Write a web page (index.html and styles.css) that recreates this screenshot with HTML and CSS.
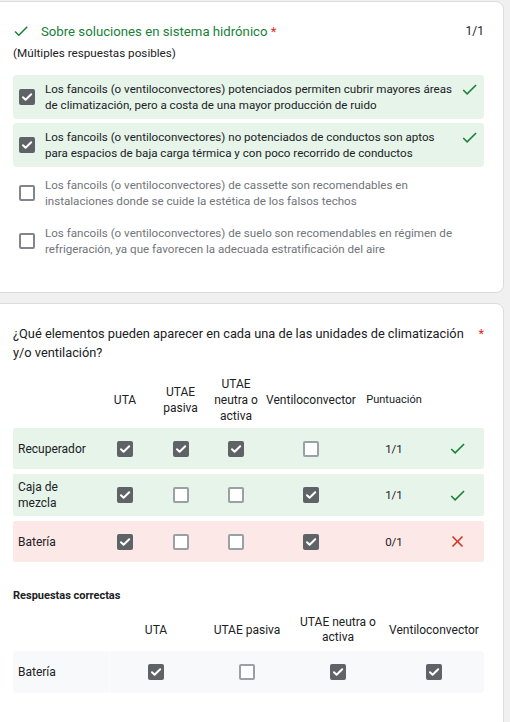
FILE: index.html
```html
<!DOCTYPE html>
<html lang="es">
<head>
<meta charset="utf-8">
<link rel="stylesheet" href="styles.css">
</head>
<body>
<svg width="0" height="0" class="defs">
  <defs>
    <symbol id="done" viewBox="0 0 24 24"><path d="M9 16.2L4.8 12l-1.4 1.4L9 19 21 7l-1.4-1.4L9 16.2z"/></symbol>
    <symbol id="close" viewBox="0 0 24 24"><path d="M19 6.41L17.59 5 12 10.59 6.41 5 5 6.41 10.59 12 5 17.59 6.41 19 12 13.41 17.59 19 19 17.59 13.41 12z"/></symbol>
    <symbol id="tick" viewBox="0 0 16 16"><path d="M4 8.2l2.6 2.6L12.2 5.2" fill="none" stroke="#fff" stroke-width="2" stroke-linecap="round" stroke-linejoin="round"/></symbol>
  </defs>
</svg>

<section class="card card-first">
  <div class="title-row">
    <svg class="ok-icon title-ok"><use href="#done"/></svg>
    <span class="title-text">Sobre soluciones en sistema hidrónico <span class="req">*</span></span>
    <span class="points">1/1</span>
  </div>
  <div class="subtitle">(Múltiples respuestas posibles)</div>
  <div class="options">
    <div class="option correct">
      <span class="cb on"><svg><use href="#tick"/></svg></span>
      <span class="opt-text">Los fancoils (o ventiloconvectores) potenciados permiten cubrir mayores áreas de climatización, pero a costa de una mayor producción de ruido</span>
      <svg class="ok-icon opt-ok"><use href="#done"/></svg>
    </div>
    <div class="option correct">
      <span class="cb on"><svg><use href="#tick"/></svg></span>
      <span class="opt-text">Los fancoils (o ventiloconvectores) no potenciados de conductos son aptos para espacios de baja carga térmica y con poco recorrido de conductos</span>
      <svg class="ok-icon opt-ok"><use href="#done"/></svg>
    </div>
    <div class="option">
      <span class="cb off"></span>
      <span class="opt-text muted">Los fancoils (o ventiloconvectores) de cassette son recomendables en instalaciones donde se cuide la estética de los falsos techos</span>
    </div>
    <div class="option">
      <span class="cb off"></span>
      <span class="opt-text muted">Los fancoils (o ventiloconvectores) de suelo son recomendables en régimen de refrigeración, ya que favorecen la adecuada estratificación del aire</span>
    </div>
  </div>
</section>

<section class="card card-second">
  <div class="question">
    <span class="q-text">¿Qué elementos pueden aparecer en cada una de las unidades de climatización y/o ventilación?</span>
    <span class="req q-req">*</span>
  </div>

  <div class="grid grid-head">
    <span></span>
    <span>UTA</span>
    <span>UTAE pasiva</span>
    <span>UTAE neutra o activa</span>
    <span>Ventiloconvector</span>
    <span class="score-head">Puntuación</span>
    <span></span>
  </div>
  <div class="grid grid-row good">
    <span class="label">Recuperador</span>
    <span class="cell"><span class="cb on"><svg><use href="#tick"/></svg></span></span>
    <span class="cell"><span class="cb on"><svg><use href="#tick"/></svg></span></span>
    <span class="cell"><span class="cb on"><svg><use href="#tick"/></svg></span></span>
    <span class="cell"><span class="cb off light"></span></span>
    <span class="cell score">1/1</span>
    <span class="cell"><svg class="ok-icon row-ok"><use href="#done"/></svg></span>
  </div>
  <div class="grid grid-row good">
    <span class="label">Caja de mezcla</span>
    <span class="cell"><span class="cb on"><svg><use href="#tick"/></svg></span></span>
    <span class="cell"><span class="cb off light"></span></span>
    <span class="cell"><span class="cb off light"></span></span>
    <span class="cell"><span class="cb on"><svg><use href="#tick"/></svg></span></span>
    <span class="cell score">1/1</span>
    <span class="cell"><svg class="ok-icon row-ok"><use href="#done"/></svg></span>
  </div>
  <div class="grid grid-row bad">
    <span class="label">Batería</span>
    <span class="cell"><span class="cb on"><svg><use href="#tick"/></svg></span></span>
    <span class="cell"><span class="cb off light"></span></span>
    <span class="cell"><span class="cb off light"></span></span>
    <span class="cell"><span class="cb on"><svg><use href="#tick"/></svg></span></span>
    <span class="cell score">0/1</span>
    <span class="cell"><svg class="bad-icon"><use href="#close"/></svg></span>
  </div>

  <div class="correct-title">Respuestas correctas</div>
  <div class="grid2 grid2-head">
    <span></span>
    <span>UTA</span>
    <span>UTAE pasiva</span>
    <span>UTAE neutra o activa</span>
    <span>Ventiloconvector</span>
  </div>
  <div class="grid2 grid2-row">
    <span class="label label2">Batería</span>
    <span class="cell"><span class="cb on"><svg><use href="#tick"/></svg></span></span>
    <span class="cell"><span class="cb off light"></span></span>
    <span class="cell"><span class="cb on"><svg><use href="#tick"/></svg></span></span>
    <span class="cell"><span class="cb on"><svg><use href="#tick"/></svg></span></span>
  </div>
</section>
</body>
</html>
```
FILE: styles.css
```css
html, body {
  margin: 0;
  padding: 0;
}
body {
  background: #f0f0f0;
  font-family: Roboto, "Liberation Sans", sans-serif;
  color: #202124;
  padding-top: 1px;
}
.defs {
  position: absolute;
  width: 0;
  height: 0;
}
.card {
  background: #fff;
  border: 1px solid #dadce0;
  border-radius: 8px;
  margin: 0 6px 10px -12px;
  padding: 0 19px 0 24px;
}
.card-first {
  padding-top: 19px;
  padding-bottom: 29px;
}
.card-second {
  padding-top: 20px;
  padding-bottom: 40px;
  margin-bottom: 0;
}
.title-row {
  display: flex;
  align-items: center;
  height: 20px;
}
.ok-icon {
  fill: #188038;
  flex: none;
}
.title-ok {
  width: 18px;
  height: 18px;
  margin-left: -1px;
  margin-right: 11px;
}
.title-text {
  flex: 1;
  font-size: 13.2px;
  color: #188038;
}
.req {
  color: #d93025;
}
.points {
  font-size: 12px;
  color: #202124;
}
.subtitle {
  margin-top: 4px;
  font-size: 11.7px;
  line-height: 16px;
}
.options {
  margin-top: 14px;
  display: flex;
  flex-direction: column;
  gap: 4px;
}
.option {
  display: flex;
  align-items: center;
  padding: 6px 6px 6px 6px;
  border-radius: 4px;
}
.option.correct {
  background: #e6f4ea;
  padding-right: 5px;
}
.cb {
  flex: none;
  width: 16px;
  height: 16px;
  box-sizing: border-box;
  border-radius: 2px;
  display: inline-flex;
}
.cb svg {
  width: 16px;
  height: 16px;
}
.cb.on {
  background: #5f6368;
}
.cb.off {
  border: 2px solid #80868b;
  background: #fff;
}
.cb.off.light {
  border-color: #9aa0a6;
}
.opt-text {
  flex: 1;
  margin-left: 10px;
  font-size: 11.6px;
  line-height: 16px;
}
.opt-text.muted {
  color: #70757a;
}
.opt-ok {
  width: 19px;
  height: 19px;
  margin-left: 0;
  align-self: flex-start;
  margin-top: -1px;
}
.question {
  display: flex;
  align-items: flex-start;
  font-size: 12.8px;
  line-height: 19px;
}
.q-text {
  flex: 1;
  padding-right: 9px;
}
.q-req {
  width: 8px;
  text-align: right;
}
.grid, .grid2 {
  display: grid;
  align-items: center;
  text-align: center;
}
.grid {
  grid-template-columns: 84px 56px 55px 56px 94px 72px 54px;
}
.grid2 {
  grid-template-columns: 97px 92px 90px 92px 100px;
}
.grid-head {
  margin-top: 14px;
  margin-bottom: 4px;
  font-size: 12px;
  line-height: 16px;
}
.score-head {
  font-size: 11px;
}
.grid-row {
  min-height: 41px;
  padding: 5px 0;
  box-sizing: border-box;
  margin-bottom: 5px;
  border-radius: 2px;
}
.grid-row.good {
  background: #e6f4ea;
}
.grid-row.bad {
  background: #fce8e6;
}
.label {
  text-align: left;
  padding-left: 5px;
  font-size: 12px;
  line-height: 16px;
}
.cell {
  display: flex;
  justify-content: center;
  align-items: center;
}
.score {
  font-size: 11.5px;
}
.row-ok {
  width: 19px;
  height: 19px;
}
.bad-icon {
  width: 19px;
  height: 19px;
  fill: #d93025;
}
.correct-title {
  margin-top: 26px;
  font-size: 11px;
  font-weight: bold;
  line-height: 16px;
}
.grid2-head {
  margin-top: 11px;
  margin-bottom: 6px;
  font-size: 12px;
  line-height: 15px;
}
.grid2-row {
  background: #f8f9fa;
  min-height: 42px;
  border-radius: 4px;
}
.label2 {
  align-self: stretch;
  display: flex;
  align-items: center;
  border-right: 1px solid #fcfcfc;
}
```
